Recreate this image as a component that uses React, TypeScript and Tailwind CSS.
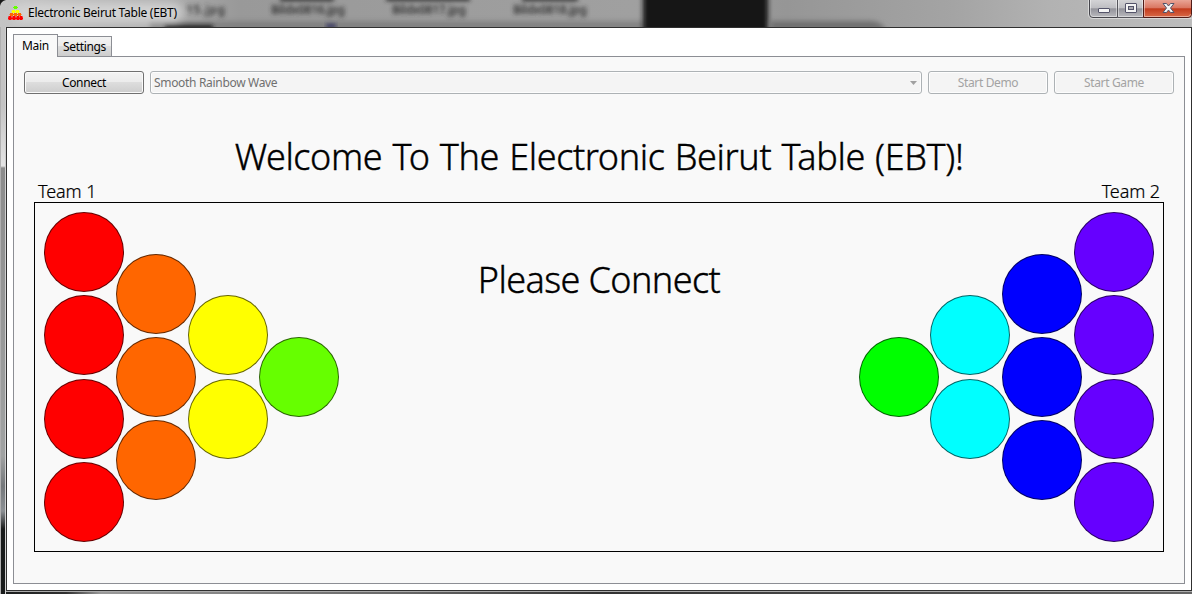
import type { ReactNode } from 'react';

const leftRack = [
  { color: 'bg-[#ff0000]', count: 4, offset: '' },
  { color: 'bg-[#ff6600]', count: 3, offset: '-ml-[8px]' },
  { color: 'bg-[#ffff00]', count: 2, offset: '-ml-[8px]' },
  { color: 'bg-[#66ff00]', count: 1, offset: '-ml-[9px]' },
];
const rightRack = [
  { color: 'bg-[#00ff00]', count: 1, offset: '' },
  { color: 'bg-[#00ffff]', count: 2, offset: '-ml-[9px]' },
  { color: 'bg-[#0000ff]', count: 3, offset: '-ml-[8px]' },
  { color: 'bg-[#6600ff]', count: 4, offset: '-ml-[8px]' },
];

function Rack({ columns }: { columns: typeof leftRack }) {
  return (
    <div className="flex items-center">
      {columns.map((c) => (
        <div key={c.color} className={`flex flex-col gap-[3.2px] ${c.offset}`}>
          {Array.from({ length: c.count }, (_, i) => (
            <div key={i} className={`size-20 rounded-full border border-black/60 ${c.color}`} />
          ))}
        </div>
      ))}
    </div>
  );
}

function DisabledButton({ children }: { children: ReactNode }) {
  return (
    <button
      disabled
      className="h-[23px] w-[120px] shrink-0 rounded-[3px] border border-[#adb2b5] bg-[#f4f4f4] tracking-[-0.35px] text-[#a3a3a3] shadow-[inset_0_0_0_1px_#fdfdfd]"
    >
      {children}
    </button>
  );
}

function AppIcon() {
  return (
    <svg width="16" height="16" viewBox="0 0 16 16" className="mt-[5px] shrink-0">
      <g fill="#66ff00"><path d="M6 1H9V4H6ZM5 2H10V3H5Z" /></g>
      <g fill="#ffff00"><path d="M4 5H7V8H4ZM8 5H11V8H8ZM3.500 6H11.500V7H3.500Z" /></g>
      <g fill="#ff6600"><path d="M2 8H5V11H2ZM6 8H9V11H6ZM10 8H13V11H10ZM1.500 9H13.500V10H1.500Z" /></g>
      <g fill="#ff0000"><path d="M0.500 11H3.500V15H0.500ZM4.500 11H7.500V15H4.500ZM8.500 11H11.500V15H8.500ZM12 11H14.500V15H12ZM0 12.500H15V14H0Z" /></g>
    </svg>
  );
}

function Backdrop() {
  return (
    <svg className="absolute inset-0" width="1192" height="27" viewBox="0 0 1192 27">
      <defs>
        <linearGradient id="glass">
          <stop offset="0" stopColor="#c4c4c4" />
          <stop offset="0.13" stopColor="#b0b0b0" />
          <stop offset="0.2" stopColor="#999" />
          <stop offset="0.53" stopColor="#a0a0a0" />
          <stop offset="0.66" stopColor="#969696" />
          <stop offset="0.8" stopColor="#a4a4a4" />
          <stop offset="0.88" stopColor="#b2b2b2" />
          <stop offset="1" stopColor="#bcbcbc" />
        </linearGradient>
        <filter id="soft" x="-20%" y="-100%" width="140%" height="300%"><feGaussianBlur stdDeviation="2.5" /></filter>
        <filter id="haze" x="-20%" y="-100%" width="140%" height="300%"><feGaussianBlur stdDeviation="2" /></filter>
        <filter id="glow" x="-20%" y="-100%" width="140%" height="300%"><feGaussianBlur stdDeviation="5" /></filter>
      </defs>
      <rect width="1192" height="27" fill="url(#glass)" />
      <rect x="150" y="21" width="496" height="10" fill="#707070" opacity="0.6" filter="url(#soft)" />
      <rect x="643" y="-10" width="125" height="50" fill="#191919" filter="url(#soft)" />
      <path d="M770 21H872Q882 22 886 30H770Z" fill="#707070" filter="url(#soft)" />
      <rect x="165" y="25" width="48" height="6" fill="#222" filter="url(#haze)" />
      <g fill="#333" filter="url(#haze)" fontFamily="Noto Sans, sans-serif" fontSize="12" fontWeight="600">
        <text x="186" y="14" textLength="39">15.jpg</text>
        <text x="271" y="14" textLength="74">Bildx0816.jpg</text>
        <text x="392" y="14" textLength="74">Bildx0817.jpg</text>
        <text x="513" y="14" textLength="74">Bildx0818.jpg</text>
        <rect x="386" y="-3" width="84" height="4" />
        <rect x="522" y="-3" width="56" height="4" />
        <rect x="280" y="-3" width="54" height="4" />
      </g>
      <rect x="326" y="24" width="10" height="4" fill="#303060" filter="url(#haze)" />
      <rect x="14" y="3" width="168" height="19" rx="8" fill="#d4d4d4" opacity="0.95" filter="url(#glow)" />
      <path d="M0 0H6Q1 1 0 6Z" fill="#181818" />
    </svg>
  );
}

function CaptionButtons() {
  return (
    <svg className="relative ml-auto" width="104" height="20" viewBox="0 0 104 20">
      <defs>
        <linearGradient id="cap" x2="0" y2="1">
          <stop offset="0" stopColor="#d6d6d8" /><stop offset="0.5" stopColor="#bdbdc1" />
          <stop offset="0.52" stopColor="#929299" /><stop offset="1" stopColor="#bbbbc0" />
        </linearGradient>
        <linearGradient id="close" x2="0" y2="1">
          <stop offset="0" stopColor="#ebaa9c" /><stop offset="0.5" stopColor="#d9745f" />
          <stop offset="0.52" stopColor="#c23a1c" /><stop offset="1" stopColor="#da6b49" />
        </linearGradient>
      </defs>
      <path d="M.5 0V14Q.5 18.500 5 18.500H103.500" fill="none" stroke="#d8d8d8" />
      <path d="M1.500 -1V14Q1.500 17.500 5 17.500H29.500V-1Z" fill="url(#cap)" stroke="#45454b" />
      <path d="M29.500 -1H55.500V17.500H29.500Z" fill="url(#cap)" stroke="#55555b" />
      <path d="M55.500 -1H103.500V14Q103.500 17.500 100 17.500H55.500Z" fill="url(#close)" stroke="#501c18" />
      <path d="M2.500 0V14Q2.500 16.500 5 16.500H28.500V0M30.500 0V16.500H54.500V0M56.500 0V16.500H100Q102.500 16.500 102.500 14" fill="none" stroke="#fff" opacity="0.45" />
      <rect x="10.500" y="8.500" width="11" height="4" rx="0.500" fill="#f4f4f4" stroke="#54546a" />
      <rect x="37.500" y="3.500" width="11" height="9" rx="0.500" fill="#f4f4f4" stroke="#54546a" />
      <rect x="40.500" y="6.500" width="5" height="3" fill="#aaaab0" stroke="#54546a" />
      <path d="M75 3.500H78.500L80.500 6L82.500 3.500H86L82.500 8L86 12.500H82.500L80.500 10L78.500 12.500H75L78.500 8Z" fill="#f4f4f4" stroke="#54546a" />
    </svg>
  );
}

export default function App() {
  return (
    <div className="flex h-[594px] w-[1192px] flex-col overflow-hidden bg-[#b8b8b8] font-['Noto_Sans','Open_Sans',sans-serif] text-[12px] leading-4 text-black">
      <header className="relative flex h-[26px] shrink-0 items-start">
        <Backdrop />
        <div className="relative flex pl-[8px]">
          <AppIcon />
          <span className="ml-1 mt-[5px] whitespace-nowrap tracking-[-0.27px]">Electronic Beirut Table (EBT)</span>
        </div>
        <CaptionButtons />
      </header>
      <div className="flex min-h-0 flex-1">
        <div className="w-[5px] shrink-0 border-l border-[#b0b0b0] bg-[linear-gradient(#c4c4c4_0px,#c4c4c4_80px,#e4e4e4_140px,#8c8c8c_142px,#a0a2a2_430px,#74777a_460px,#8c9094_485px,#181a1a_503px)]" />
        <div className="flex flex-1 flex-col border-l border-t border-[#cfcfcf] bg-[#555]">
          <main className="flex h-[564px] flex-col border border-[#303030] bg-white px-[6px] pb-[6px] pt-[6px]">
            <nav className="relative z-10 -mb-px flex h-[23px] items-end">
              <div className="h-[23px] w-[45px] border border-b-0 border-[#8c8e94] bg-[#f9f9f9] pl-[8px] pt-[3px] tracking-[-0.35px]">Main</div>
              <div className="-ml-px flex h-[21px] w-[55px] justify-center border border-[#8c8e94] bg-[linear-gradient(#f3f3f3_0%,#ebebeb_50%,#ddd_50%,#cdcdcd_100%)] pt-[2px] tracking-[-0.35px]">Settings</div>
            </nav>
            <section className="flex flex-1 flex-col border border-[#8c8e94] bg-[#f9f9f9] px-[10px] pt-[14px]">
              <div className="flex gap-[6px]">
                <button className="h-[23px] w-[120px] shrink-0 rounded-[3px] border border-[#707070] bg-[linear-gradient(#f3f3f3_0%,#ebebeb_50%,#ddd_50%,#cdcdcd_100%)] tracking-[-0.35px] shadow-[inset_0_0_0_1px_#fafafa]">Connect</button>
                <div className="flex h-[23px] flex-1 items-center justify-between rounded-[3px] border border-[#adb2b5] bg-[#f4f4f4] pl-[3px] pr-[4px] text-[#707070] shadow-[inset_0_0_0_1px_#fdfdfd]">
                  <span className="tracking-[-0.32px]">Smooth Rainbow Wave</span>
                  <svg width="7" height="4" viewBox="0 0 7 4"><path d="M0 0H7L3.500 4Z" fill="#a0a0a0" /></svg>
                </div>
                <DisabledButton>Start Demo</DisabledButton>
                <DisabledButton>Start Game</DisabledButton>
              </div>
              <h1 className="mt-[38px] h-[49px] whitespace-nowrap text-center text-[36px] font-light leading-[50px] tracking-[-0.4px] [word-spacing:1.3px] [-webkit-text-stroke:0.4px_black]">Welcome To The Electronic Beirut Table (EBT)!</h1>
              <div className="mb-px flex h-5 justify-between px-[14px] text-[18px] font-light leading-5 tracking-[-0.1px] [-webkit-text-stroke:0.2px_black]">
                <span>Team 1</span>
                <span>Team 2</span>
              </div>
              <div className="mx-[10px] flex h-[350px] items-center justify-between border border-black px-[9px]">
                <Rack columns={leftRack} />
                <p className="mb-[195px] whitespace-nowrap text-[36px] font-light leading-[50px] tracking-[-0.6px] [-webkit-text-stroke:0.4px_black]">Please Connect</p>
                <Rack columns={rightRack} />
              </div>
            </section>
          </main>
          <div className="h-px bg-[#aaa]" />
          <div className="flex-1 bg-[linear-gradient(90deg,#1c1e1e_0px,#303030_60px,#999_95px,#666_400px,#333_600px,#666_1190px)]" />
        </div>
      </div>
    </div>
  );
}
